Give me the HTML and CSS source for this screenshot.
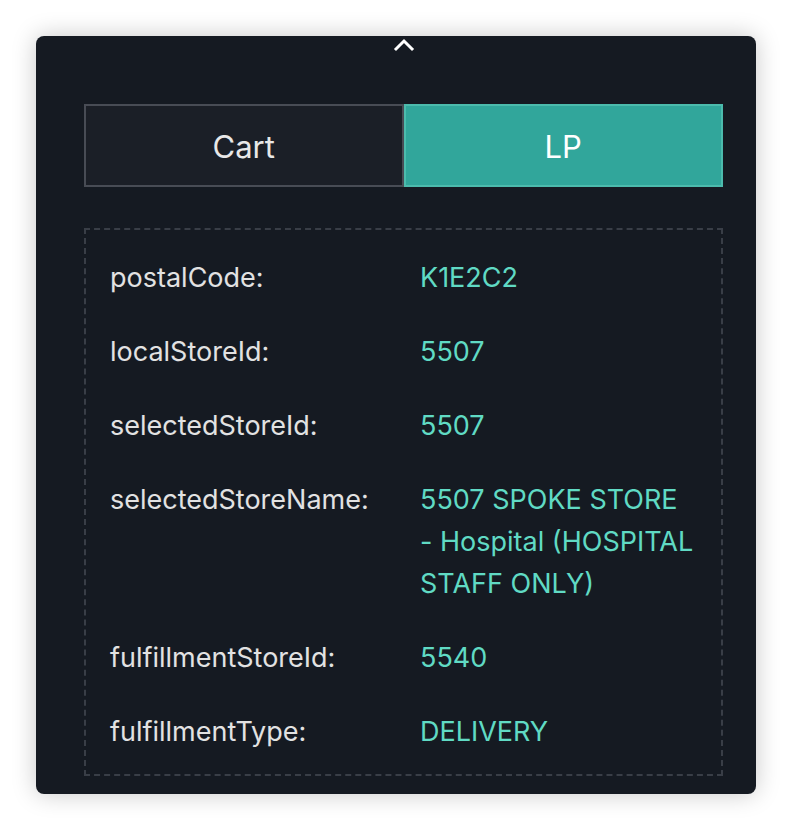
FILE: index.html
```html
<!DOCTYPE html>
<html>
<head>
<meta charset="utf-8">
<link rel="stylesheet" href="styles.css">
</head>
<body>
<div class="panel">
  <div class="toggle">
    <svg width="22" height="14" viewBox="0 0 22 14"><path d="M3 11 L11 3 L19 11" fill="none" stroke="#ffffff" stroke-width="3" stroke-linecap="square"/></svg>
  </div>
  <div class="tabs">
    <div class="tab">Cart</div>
    <div class="tab active">LP</div>
  </div>
  <div class="box">
    <div class="row"><div class="key">postalCode:</div><div class="val">K1E2C2</div></div>
    <div class="row"><div class="key">localStoreId:</div><div class="val">5507</div></div>
    <div class="row"><div class="key">selectedStoreId:</div><div class="val">5507</div></div>
    <div class="row"><div class="key">selectedStoreName:</div><div class="val">5507 SPOKE STORE - Hospital (HOSPITAL STAFF ONLY)</div></div>
    <div class="row"><div class="key">fulfillmentStoreId:</div><div class="val">5540</div></div>
    <div class="row"><div class="key">fulfillmentType:</div><div class="val">DELIVERY</div></div>
  </div>
</div>
</body>
</html>
```
FILE: styles.css
```css
html, body {
  margin: 0;
  padding: 0;
  background: #ffffff;
}
body {
  padding: 36px 36px 36px 36px;
  font-family: Inter, "Noto Sans", sans-serif;
}
.panel {
  width: 720px;
  height: 758px;
  box-sizing: border-box;
  background: #151a22;
  border-radius: 8px;
  box-shadow: 0 0 24px rgba(0, 0, 0, 0.22);
  padding: 0 33px 18px 48px;
  display: flex;
  flex-direction: column;
}
.toggle {
  height: 68px;
  display: flex;
  justify-content: center;
  align-items: flex-start;
  padding-top: 2px;
  box-sizing: border-box;
}
.tabs {
  display: flex;
  height: 83px;
}
.tab {
  flex: 1;
  box-sizing: border-box;
  border: 2px solid #484c55;
  background: #1b1f27;
  color: #e8e8e8;
  font-size: 31px;
  display: flex;
  align-items: center;
  justify-content: center;
  padding-top: 2px;
}
.tab.active {
  background: #31a69b;
  border-color: #4cbbad;
  color: #ffffff;
}
.box {
  margin-top: 41px;
  flex: 1;
  border: 2px dashed #393e47;
  padding: 27px 24px 0 24px;
  display: flex;
  flex-direction: column;
  gap: 32px;
}
.row {
  display: flex;
  font-size: 27px;
  line-height: 42px;
}
.key {
  width: 310px;
  color: #e2e2e2;
  flex-shrink: 0;
}
.val {
  color: #60dac4;
  flex: 1;
}
```
